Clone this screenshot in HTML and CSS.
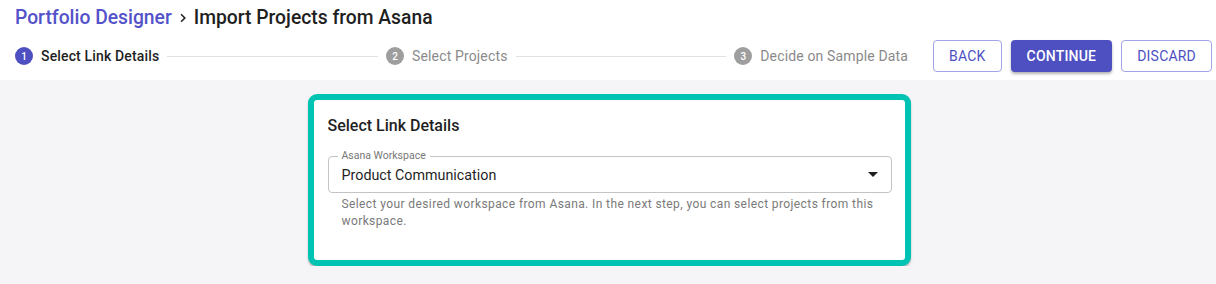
FILE: index.html
```html
<!DOCTYPE html>
<html lang="en">
  <head>
    <meta charset="UTF-8" />
    <meta name="viewport" content="width=device-width, initial-scale=1.0" />
    <title>Import Projects from Asana</title>
    <link rel="stylesheet" href="styles.css">
  </head>
  <body>
    <header class="page-header">
      <h1 class="crumbs">
        <span class="crumb-link">Portfolio Designer</span>
        <svg class="crumb-sep" width="16" height="16" viewBox="0 0 24 24">
          <path d="M8.3 16.9 13.2 12 8.3 7.1 9.9 5.5l6.5 6.5-6.5 6.5z" fill="#1f1f1f" />
        </svg>
        <span>Import Projects from Asana</span>
      </h1>

      <div class="toolbar">
        <ol class="stepper">
          <li class="step active"><span class="step-num">1</span>Select Link Details</li>
          <li class="step-line"></li>
          <li class="step"><span class="step-num">2</span>Select Projects</li>
          <li class="step-line"></li>
          <li class="step"><span class="step-num">3</span>Decide on Sample Data</li>
        </ol>

        <div class="actions">
          <button class="btn btn-outline">BACK</button>
          <button class="btn btn-primary">CONTINUE</button>
          <button class="btn btn-outline">DISCARD</button>
        </div>
      </div>
    </header>

    <main class="content">
      <section class="card">
        <h2>Select Link Details</h2>

        <div class="field">
          <span class="field-label">Asana Workspace</span>
          <div class="field-value">Product Communication</div>
          <svg class="field-arrow" width="10" height="5" viewBox="0 0 10 5">
            <path d="M0 0h10L5 5z" fill="#1f1f1f" />
          </svg>
        </div>

        <p class="field-help">
          Select your desired workspace from Asana. In the next step, you can select projects from this
          workspace.
        </p>
      </section>
    </main>
  </body>
</html>
```

FILE: styles.css
```css
body {
  background-color: #f5f5f7;
  color: #1f1f1f;
  font-family: Roboto, "Liberation Sans", sans-serif;
  margin: 0;
}
.page-header {
  background-color: #fff;
  height: 80px;
  padding: 0 4px 0 15px;
  box-sizing: border-box;
}
.crumbs {
  align-items: center;
  display: flex;
  font-size: 19.3px;
  font-weight: 500;
  gap: 2px;
  line-height: 24px;
  margin: 0;
  padding-top: 6px;
}
.crumb-link {
  color: #5352c9;
}
.crumb-sep {
  margin: 0 1px;
}
.toolbar {
  align-items: center;
  display: flex;
  margin-top: 10px;
}
.stepper {
  align-items: center;
  display: flex;
  flex: 1;
  list-style: none;
  margin: 0;
  padding: 0;
}
.step {
  align-items: center;
  color: #8a8a8a;
  display: flex;
  font-size: 14px;
  letter-spacing: 0.15px;
  white-space: nowrap;
}
.step.active {
  color: #1f1f1f;
  font-weight: 500;
}
.step-num {
  align-items: center;
  background-color: #9e9e9e;
  border-radius: 50%;
  color: #fff;
  display: flex;
  font-size: 10px;
  font-weight: 500;
  height: 18px;
  justify-content: center;
  letter-spacing: 0;
  margin-right: 8px;
  width: 18px;
}
.step.active .step-num {
  background-color: #4e50c2;
}
.step-line {
  border-top: 1px solid #e2e2e2;
  flex: 1;
  margin: 0 8px;
}
.actions {
  display: flex;
  gap: 9px;
  margin-left: 25px;
}
.btn {
  border-radius: 4px;
  box-sizing: border-box;
  cursor: pointer;
  font-family: inherit;
  font-size: 14px;
  font-weight: 500;
  height: 32px;
  letter-spacing: 0.2px;
  padding: 0 15px;
}
.btn-outline {
  background-color: #fff;
  border: 1px solid #a3a3e8;
  color: #4e50c2;
  font-weight: 400;
}
.btn-primary {
  background-color: #4e50c2;
  border: none;
  box-shadow: 0 2px 3px rgba(0, 0, 0, 0.3);
  color: #fff;
  padding: 0 16px;
}
.content {
  display: flex;
  justify-content: center;
  padding-top: 14px;
}
.card {
  background-color: #fff;
  border: 6px solid #00c3b3;
  border-radius: 9px;
  box-shadow: 0 2px 2px rgba(0, 0, 0, 0.25);
  box-sizing: border-box;
  margin-left: 2px;
  padding: 16px 13px 30px 14px;
  width: 603px;
}
.card h2 {
  font-size: 16px;
  font-weight: 500;
  line-height: 20px;
  margin: 0 0 20px;
}
.field {
  align-items: center;
  border: 1px solid #c4c4c4;
  border-radius: 4px;
  display: flex;
  height: 37px;
  padding: 0 13px 0 13px;
  position: relative;
  box-sizing: border-box;
}
.field-label {
  background-color: #fff;
  color: #777;
  font-size: 10.5px;
  left: 9px;
  line-height: 12px;
  padding: 0 4px;
  position: absolute;
  top: -7px;
}
.field-value {
  flex: 1;
  font-size: 14.3px;
  padding-top: 1px;
}
.field-help {
  color: #7a7a7a;
  font-size: 12px;
  letter-spacing: 0.4px;
  line-height: 17px;
  margin: 3px 0 0;
  padding: 0 14px;
}
```
